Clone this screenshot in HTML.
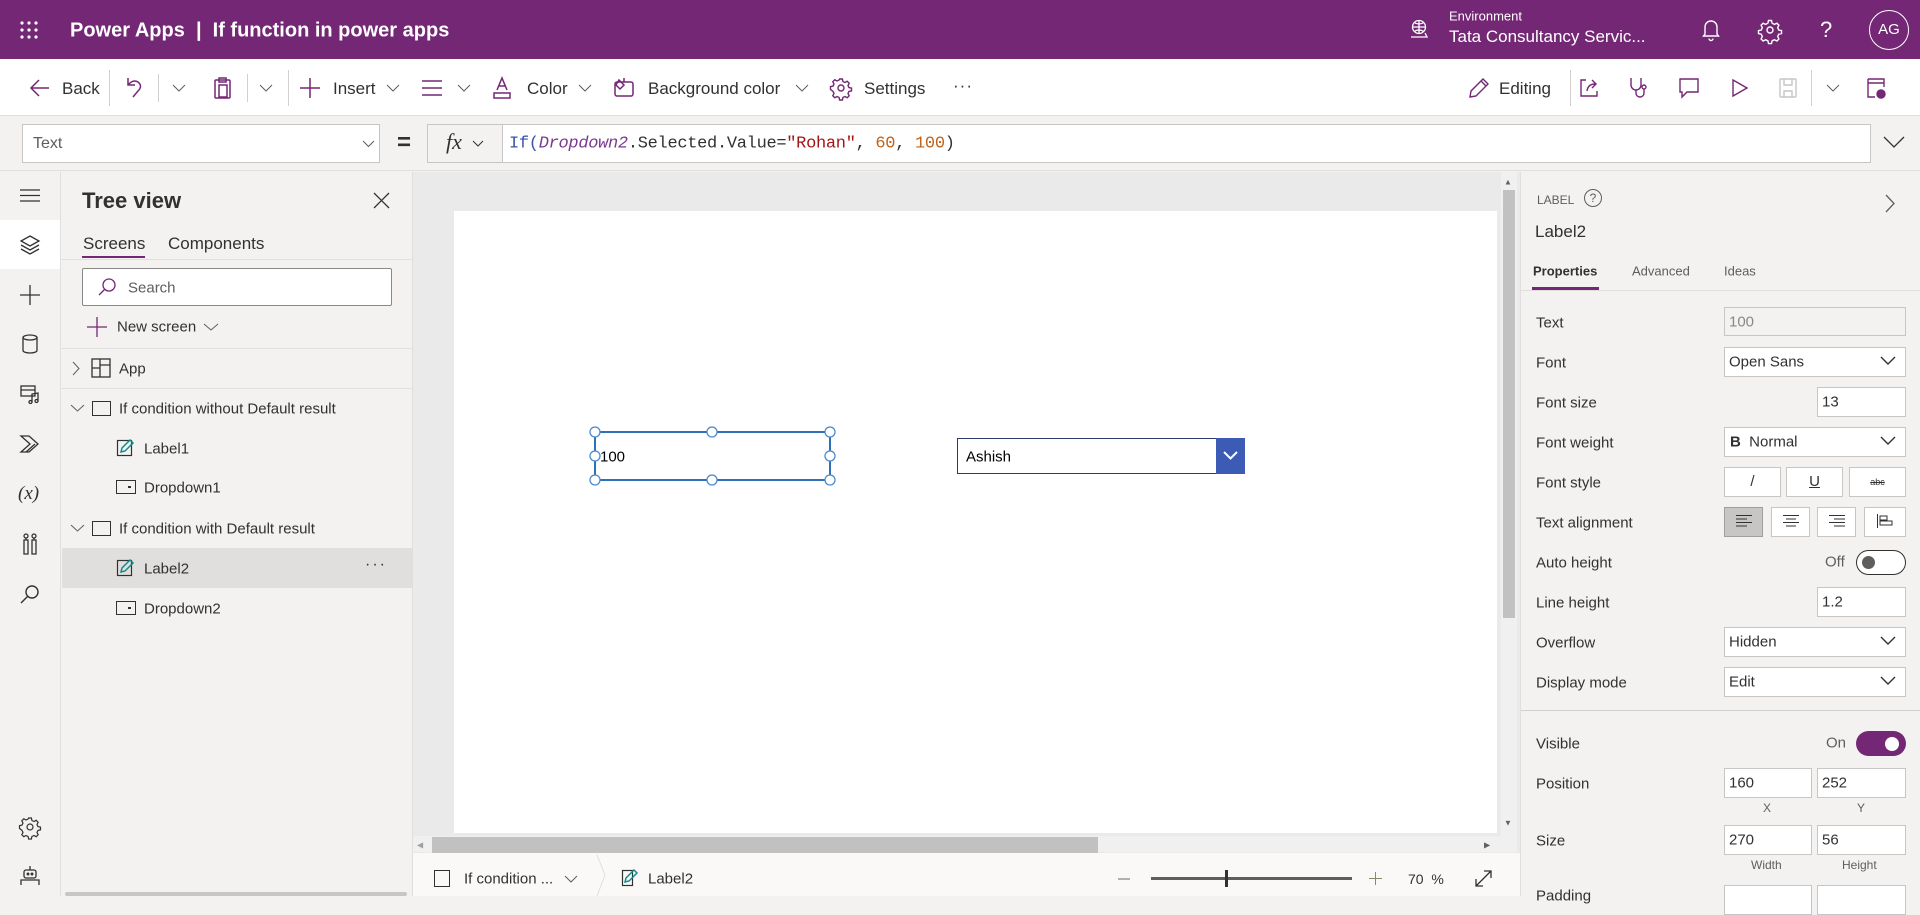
<!DOCTYPE html>
<html><head><meta charset="utf-8"><style>
*{box-sizing:border-box;margin:0;padding:0}
body{width:1920px;height:896px;overflow:hidden;background:#f3f2f1;font-family:"Liberation Sans",sans-serif;color:#323130;position:relative}
.a{position:absolute}
.t{position:absolute;white-space:nowrap;transform:translateY(-50%)}
svg{position:absolute;overflow:visible}
.inp{position:absolute;background:#fff;border:1px solid #c8c6c4}
.lbl{position:absolute;left:1536px;font-size:15px;color:#323130;transform:translateY(-50%)}
.dd svg{right:10px;top:9px}
</style></head><body>

<!-- top bar -->
<div class="a" style="left:0;top:0;width:1920px;height:59px;background:#742774"></div>
<svg style="left:20px;top:21px" width="18" height="18"><g fill="#fff"><circle cx="2" cy="2" r="1.6"/><circle cx="9" cy="2" r="1.6"/><circle cx="16" cy="2" r="1.6"/><circle cx="2" cy="9" r="1.6"/><circle cx="9" cy="9" r="1.6"/><circle cx="16" cy="9" r="1.6"/><circle cx="2" cy="16" r="1.6"/><circle cx="9" cy="16" r="1.6"/><circle cx="16" cy="16" r="1.6"/></g></svg>
<div class="t" style="left:70px;top:31px;color:#fff;font-size:20px;font-weight:bold">Power Apps&nbsp; | &nbsp;If function in power apps</div>
<svg style="left:1409px;top:19px" width="20" height="20" fill="none" stroke="#fff" stroke-width="1.3"><circle cx="10" cy="8" r="6.5"/><path d="M3.5 8h13M10 1.5v13M5 3.5q5 3 10 0M5 12.5q5-3 10 0M2 18h16l-2-4"/></svg>
<div class="t" style="left:1449px;top:16px;color:#fff;font-size:13px">Environment</div>
<div class="t" style="left:1449px;top:37px;color:#fff;font-size:17px">Tata Consultancy Servic...</div>
<svg style="left:1702px;top:19px" width="18" height="22" fill="none" stroke="#fff" stroke-width="1.4"><path d="M3 15V8a6 6 0 0 1 12 0v7l1.5 2h-15zM7 19.5a2 2 0 0 0 4 0"/></svg>
<svg style="left:1759px;top:19px" width="22" height="22" fill="none" stroke="#fff" stroke-width="1.4"><circle cx="11" cy="11" r="3"/><path d="M9.5 1.5h3l.6 2.7 2.3 1.2 2.5-1.2 2 2-1.2 2.5 1 2.3 2.8.6v3l-2.8.6-1 2.3 1.2 2.5-2 2-2.5-1.2-2.3 1-.6 2.8h-3l-.6-2.8-2.3-1-2.5 1.2-2-2 1.2-2.5-1-2.3-2.8-.6v-3l2.8-.6 1-2.3-1.2-2.5 2-2 2.5 1.2 2.3-1.2z"/></svg>
<div class="t" style="left:1820px;top:30px;color:#fff;font-size:22px">?</div>
<div class="a" style="left:1869px;top:10px;width:40px;height:40px;border:1.5px solid #fff;border-radius:50%;color:#fff;font-size:15px;text-align:center;line-height:37px">AG</div>

<!-- toolbar -->
<div class="a" style="left:0;top:59px;width:1920px;height:57px;background:#fff;border-bottom:1px solid #e1dfdd"></div>
<svg style="left:30px;top:79px" width="20" height="18" fill="none" stroke="#742774" stroke-width="1.5"><path d="M19 9H2M9 1L1 9l8 8"/></svg>
<div class="t" style="left:62px;top:89px;font-size:17px">Back</div>
<div class="a" style="left:109px;top:70px;width:1px;height:36px;background:#d2d0ce"></div>
<svg style="left:126px;top:77px" width="18" height="22" fill="none" stroke="#742774" stroke-width="1.5"><path d="M2 1v7h7M2 8q5-6 10-3 5 4 0 9l-5 6"/></svg>
<div class="a" style="left:158px;top:74px;width:1px;height:28px;background:#d2d0ce"></div>
<svg style="left:173px;top:85px" width="12" height="7" fill="none" stroke="#605e5c"><path d="M0 0l6 6 6-6"/></svg>
<svg style="left:214px;top:77px" width="18" height="22" fill="none" stroke="#742774" stroke-width="1.5"><rect x="1" y="3" width="15" height="18" rx="1"/><rect x="5" y="1" width="7" height="4"/><rect x="5" y="8" width="8" height="12"/></svg>
<div class="a" style="left:247px;top:74px;width:1px;height:28px;background:#d2d0ce"></div>
<svg style="left:260px;top:85px" width="12" height="7" fill="none" stroke="#605e5c"><path d="M0 0l6 6 6-6"/></svg>
<div class="a" style="left:288px;top:70px;width:1px;height:36px;background:#d2d0ce"></div>
<svg style="left:300px;top:78px" width="20" height="20" fill="none" stroke="#742774" stroke-width="1.5"><path d="M10 0v20M0 10h20"/></svg>
<div class="t" style="left:333px;top:89px;font-size:17px">Insert</div>
<svg style="left:387px;top:85px" width="12" height="7" fill="none" stroke="#605e5c"><path d="M0 0l6 6 6-6"/></svg>
<svg style="left:422px;top:80px" width="20" height="16" fill="none" stroke="#742774" stroke-width="1.5"><path d="M0 1h20M0 8h20M0 15h20"/></svg>
<svg style="left:458px;top:85px" width="12" height="7" fill="none" stroke="#605e5c"><path d="M0 0l6 6 6-6"/></svg>
<svg style="left:493px;top:77px" width="18" height="22" fill="none" stroke="#742774" stroke-width="1.5"><path d="M4 13l5-12 5 12M6 9h6"/><rect x="1" y="16" width="16" height="5"/></svg>
<div class="t" style="left:527px;top:89px;font-size:17px">Color</div>
<svg style="left:579px;top:85px" width="12" height="7" fill="none" stroke="#605e5c"><path d="M0 0l6 6 6-6"/></svg>
<svg style="left:614px;top:77px" width="20" height="20" fill="none" stroke="#742774" stroke-width="1.5"><rect x="1" y="5" width="18" height="14" rx="2"/><path d="M5 3l5 5-4 4-4-4zM10 1v4"/></svg>
<div class="t" style="left:648px;top:89px;font-size:17px">Background color</div>
<svg style="left:796px;top:85px" width="12" height="7" fill="none" stroke="#605e5c"><path d="M0 0l6 6 6-6"/></svg>
<svg style="left:831px;top:78px" width="20" height="20" fill="none" stroke="#742774" stroke-width="1.4"><circle cx="10" cy="10" r="3"/><path d="M8.6 1h2.8l.5 2.5 2.1 1 2.2-1.2 2 2-1.2 2.2 1 2.1 2.5.5v2.8l-2.5.5-1 2.1 1.2 2.2-2 2-2.2-1.2-2.1 1-.5 2.5H8.6l-.5-2.5-2.1-1-2.2 1.2-2-2 1.2-2.2-1-2.1L-.5 11.4V8.6L2 8.1l1-2.1-1.2-2.2 2-2L6 3l2.1-1z"/></svg>
<div class="t" style="left:864px;top:89px;font-size:17px">Settings</div>
<div class="t" style="left:953px;top:86px;font-size:17px;letter-spacing:1px">···</div>

<svg style="left:1469px;top:78px" width="20" height="20" fill="none" stroke="#742774" stroke-width="1.4"><path d="M14 1l5 5L7 18l-6 1 1-6zM12 3l5 5"/></svg>
<div class="t" style="left:1499px;top:89px;font-size:17px">Editing</div>
<div class="a" style="left:1570px;top:70px;width:1px;height:36px;background:#d2d0ce"></div>
<svg style="left:1579px;top:78px" width="20" height="20" fill="none" stroke="#742774" stroke-width="1.4"><path d="M7 2H2v16h16v-5M8 13q1-7 8-7M13 2l4 4-4 4"/></svg>
<svg style="left:1629px;top:77px" width="20" height="22" fill="none" stroke="#742774" stroke-width="1.4"><path d="M2 1v7a5 5 0 0 0 10 0V1M7 13v3a4 4 0 0 0 8 0v-4"/><circle cx="15" cy="10" r="2"/></svg>
<svg style="left:1679px;top:78px" width="20" height="20" fill="none" stroke="#742774" stroke-width="1.4"><path d="M1 1h18v13H8l-5 5v-5H1z"/></svg>
<svg style="left:1732px;top:79px" width="16" height="18" fill="none" stroke="#742774" stroke-width="1.4"><path d="M1 1l14 8-14 8z"/></svg>
<svg style="left:1779px;top:78px" width="18" height="20" fill="none" stroke="#c8c6c4" stroke-width="1.4"><rect x="1" y="1" width="16" height="18" rx="1"/><path d="M5 1v6h8V1M5 19v-6h8v6"/></svg>
<div class="a" style="left:1811px;top:70px;width:1px;height:36px;background:#d2d0ce"></div>
<svg style="left:1827px;top:85px" width="12" height="7" fill="none" stroke="#605e5c"><path d="M0 0l6 6 6-6"/></svg>
<svg style="left:1867px;top:78px" width="20" height="22" fill="none" stroke="#742774" stroke-width="1.4"><path d="M1 1h16v8M1 1v18h7M1 5h16"/><circle cx="14" cy="16" r="4" fill="#742774"/></svg>

<!-- formula bar -->
<div class="a" style="left:0;top:117px;width:1920px;height:54px;background:#f3f2f1;border-bottom:1px solid #e1dfdd"></div>
<div class="inp" style="left:22px;top:124px;width:358px;height:39px"></div>
<div class="t" style="left:33px;top:144px;font-size:16px;color:#605e5c">Text</div>
<svg style="left:363px;top:141px" width="11" height="6" fill="none" stroke="#605e5c"><path d="M0 0l5.5 5.5L11 0"/></svg>
<div class="t" style="left:397px;top:143px;font-size:24px;font-weight:bold">=</div>
<div class="inp" style="left:427px;top:124px;width:76px;height:39px;background:#f3f2f1"></div>
<div class="t" style="left:446px;top:142px;font-size:22px;font-family:'Liberation Serif',serif;font-style:italic">fx</div>
<svg style="left:473px;top:141px" width="10" height="6" fill="none" stroke="#323130"><path d="M0 0l5 5 5-5"/></svg>
<div class="inp" style="left:502px;top:124px;width:1369px;height:39px"></div>
<div class="t" style="left:509px;top:144px;font-size:17px;font-family:'Liberation Mono',monospace;letter-spacing:-0.3px"><span style="color:#3655a7">If(</span><span style="color:#7a3a90;font-style:italic">Dropdown2</span>.Selected.Value=<span style="color:#a31515">"Rohan"</span>, <span style="color:#c0631b">60</span>, <span style="color:#c0631b">100</span>)</div>
<svg style="left:1884px;top:137px" width="20" height="11" fill="none" stroke="#323130" stroke-width="1.3"><path d="M0 0l10 10L20 0"/></svg>

<!-- left rail -->
<div class="a" style="left:0;top:172px;width:61px;height:724px;background:#f3f2f1;border-right:1px solid #e1dfdd"></div>
<div class="a" style="left:0;top:220px;width:60px;height:49px;background:#fff"></div>
<svg style="left:20px;top:189px" width="20" height="13" fill="none" stroke="#323130" stroke-width="1.2"><path d="M0 1h20M0 6.5h20M0 12h20"/></svg>
<svg style="left:20px;top:235px" width="20" height="20" fill="none" stroke="#323130" stroke-width="1.3"><path d="M10 1l9 5-9 5-9-5zM1 10l9 5 9-5M1 14l9 5 9-5"/></svg>
<svg style="left:20px;top:285px" width="20" height="20" fill="none" stroke="#323130" stroke-width="1.3"><path d="M10 0v20M0 10h20"/></svg>
<svg style="left:22px;top:334px" width="16" height="20" fill="none" stroke="#323130" stroke-width="1.3"><ellipse cx="8" cy="3.5" rx="7" ry="2.5"/><path d="M1 3.5v13a7 2.5 0 0 0 14 0v-13"/></svg>
<svg style="left:20px;top:384px" width="20" height="20" fill="none" stroke="#323130" stroke-width="1.3"><rect x="1" y="2" width="14" height="10"/><path d="M1 6h14M12 18V10l6-1v8"/><circle cx="10.5" cy="18" r="1.5"/><circle cx="16.5" cy="17" r="1.5"/></svg>
<svg style="left:20px;top:435px" width="20" height="18" fill="none" stroke="#323130" stroke-width="1.3"><path d="M1 1h8l9 8-9 8H1l9-8zM6 17l9-8"/></svg>
<div class="t" style="left:18px;top:494px;font-size:19px;font-family:'Liberation Serif',serif;font-style:italic">(x)</div>
<svg style="left:22px;top:533px" width="16" height="22" fill="none" stroke="#323130" stroke-width="1.3"><circle cx="4" cy="3" r="2"/><circle cx="12" cy="3" r="2"/><path d="M2 7h4v14H2zM10 7h4v14h-4zM4 5v2M12 5v2"/></svg>
<svg style="left:20px;top:584px" width="20" height="20" fill="none" stroke="#323130" stroke-width="1.4"><circle cx="12" cy="8" r="6"/><path d="M8 12L1 19"/></svg>
<svg style="left:20px;top:817px" width="20" height="20" fill="none" stroke="#323130" stroke-width="1.2"><circle cx="10" cy="10" r="3"/><path d="M8.6 1h2.8l.5 2.5 2.1 1 2.2-1.2 2 2-1.2 2.2 1 2.1 2.5.5v2.8l-2.5.5-1 2.1 1.2 2.2-2 2-2.2-1.2-2.1 1-.5 2.5H8.6l-.5-2.5-2.1-1-2.2 1.2-2-2 1.2-2.2-1-2.1L-.5 11.4V8.6L2 8.1l1-2.1-1.2-2.2 2-2L6 3l2.1-1z"/></svg>
<svg style="left:20px;top:866px" width="20" height="20" fill="none" stroke="#323130" stroke-width="1.3"><path d="M10 0v4"/><rect x="4" y="4" width="12" height="8" rx="2"/><path d="M1 19v-5h18v5"/><circle cx="8" cy="8" r=".8"/><circle cx="12" cy="8" r=".8"/></svg>

<!-- tree panel -->
<div class="a" style="left:62px;top:172px;width:351px;height:724px;background:#f3f2f1;border-right:1px solid #e1dfdd"></div>
<div class="t" style="left:82px;top:201px;font-size:22px;font-weight:bold;color:#323130">Tree view</div>
<svg style="left:374px;top:193px" width="15" height="15" fill="none" stroke="#323130" stroke-width="1.3"><path d="M0 0l15 15M15 0L0 15"/></svg>
<div class="t" style="left:83px;top:244px;font-size:17px">Screens</div>
<div class="t" style="left:168px;top:244px;font-size:17px">Components</div>
<div class="a" style="left:82px;top:256px;width:63px;height:2px;background:#742774"></div>
<div class="a" style="left:62px;top:259px;width:350px;height:1px;background:#e1dfdd"></div>
<div class="inp" style="left:82px;top:268px;width:310px;height:38px;border-color:#8a8886;border-radius:2px"></div>
<svg style="left:98px;top:278px" width="18" height="18" fill="none" stroke="#742774" stroke-width="1.3"><circle cx="11" cy="7" r="6"/><path d="M7 11l-6 6"/></svg>
<div class="t" style="left:128px;top:288px;font-size:15px;color:#605e5c">Search</div>
<svg style="left:87px;top:317px" width="20" height="20" fill="none" stroke="#742774" stroke-width="1.3"><path d="M10 0v20M0 10h20"/></svg>
<div class="t" style="left:117px;top:327px;font-size:15px">New screen</div>
<svg style="left:204px;top:324px" width="14" height="7" fill="none" stroke="#605e5c"><path d="M0 0l7 6 7-6"/></svg>
<div class="a" style="left:62px;top:348px;width:350px;height:1px;background:#e1dfdd"></div>
<svg style="left:73px;top:362px" width="7" height="13" fill="none" stroke="#605e5c"><path d="M0 0l6 6.5L0 13"/></svg>
<svg style="left:91px;top:358px" width="20" height="20" fill="none" stroke="#323130" stroke-width="1.3"><rect x="1" y="1" width="18" height="18"/><path d="M9 1v18M1 10h8M9 7h10"/></svg>
<div class="t" style="left:119px;top:369px;font-size:15px">App</div>
<div class="a" style="left:62px;top:388px;width:350px;height:1px;background:#e1dfdd"></div>
<svg style="left:71px;top:405px" width="13" height="7" fill="none" stroke="#605e5c"><path d="M0 0l6.5 6L13 0"/></svg>
<div class="a" style="left:92px;top:401px;width:19px;height:15px;border:1.3px solid #323130"></div>
<div class="t" style="left:119px;top:409px;font-size:15px">If condition without Default result</div>
<svg style="left:117px;top:439px" width="17" height="17" fill="none" stroke="#323130" stroke-width="1.2"><rect x=".5" y="1.5" width="14" height="15"/><path d="M4 13l1-4 8-8 3 3-8 8z" stroke="#0f8b8d" stroke-width="1.5"/></svg>
<div class="t" style="left:144px;top:449px;font-size:15px">Label1</div>
<div class="a" style="left:116px;top:480px;width:20px;height:14px;border:1.3px solid #323130"></div><div class="a" style="left:128px;top:486px;width:3px;height:2px;background:#323130"></div>
<div class="t" style="left:144px;top:488px;font-size:15px">Dropdown1</div>
<svg style="left:71px;top:525px" width="13" height="7" fill="none" stroke="#605e5c"><path d="M0 0l6.5 6L13 0"/></svg>
<div class="a" style="left:92px;top:521px;width:19px;height:15px;border:1.3px solid #323130"></div>
<div class="t" style="left:119px;top:529px;font-size:15px">If condition with Default result</div>
<div class="a" style="left:62px;top:548px;width:350px;height:40px;background:#e1dfdd"></div>
<svg style="left:117px;top:559px" width="17" height="17" fill="none" stroke="#323130" stroke-width="1.2"><rect x=".5" y="1.5" width="14" height="15"/><path d="M4 13l1-4 8-8 3 3-8 8z" stroke="#0f8b8d" stroke-width="1.5"/></svg>
<div class="t" style="left:144px;top:569px;font-size:15px">Label2</div>
<div class="t" style="left:365px;top:565px;font-size:16px;letter-spacing:2px">···</div>
<div class="a" style="left:116px;top:601px;width:20px;height:14px;border:1.3px solid #323130"></div><div class="a" style="left:128px;top:607px;width:3px;height:2px;background:#323130"></div>
<div class="t" style="left:144px;top:609px;font-size:15px">Dropdown2</div>
<div class="a" style="left:65px;top:892px;width:342px;height:4px;background:#c8c6c4;border-radius:2px"></div>

<!-- canvas -->
<div class="a" style="left:413px;top:172px;width:1107px;height:685px;background:#eaeaea"></div>
<div class="a" style="left:454px;top:211px;width:1043px;height:622px;background:#fff"></div>
<div class="a" style="left:1501px;top:172px;width:16px;height:664px;background:#f0f0f0"></div>
<div class="a" style="left:1503px;top:190px;width:12px;height:428px;background:#c1c1c1"></div>
<div class="t" style="left:1504px;top:182px;font-size:8px;color:#606060">▲</div>
<div class="t" style="left:1504px;top:823px;font-size:8px;color:#606060">▼</div>
<div class="a" style="left:413px;top:836px;width:1104px;height:16px;background:#f0f0f0"></div>
<div class="a" style="left:432px;top:837px;width:666px;height:16px;background:#c1c1c1"></div>
<div class="t" style="left:417px;top:845px;font-size:8px;color:#a0a0a0">◀</div>
<div class="t" style="left:1484px;top:845px;font-size:8px;color:#606060">▶</div>

<div class="a" style="left:594px;top:431px;width:237px;height:50px;border:2px solid #2f6fb6"></div>
<svg style="left:0;top:0" width="1" height="1"><g fill="#fff" stroke="#4a8ad0" stroke-width="1.3"><circle cx="595" cy="432" r="5"/><circle cx="712" cy="432" r="5"/><circle cx="830" cy="432" r="5"/><circle cx="595" cy="456" r="5"/><circle cx="830" cy="456" r="5"/><circle cx="595" cy="480" r="5"/><circle cx="712" cy="480" r="5"/><circle cx="830" cy="480" r="5"/></g></svg>
<div class="t" style="left:600px;top:457px;font-size:15px;color:#000">100</div>
<div class="a" style="left:957px;top:438px;width:288px;height:36px;border:1.5px solid #2b3a6f;background:#fff"></div>
<div class="a" style="left:1216px;top:438px;width:29px;height:36px;background:#3b5bb5"></div>
<svg style="left:1223px;top:451px" width="15" height="9" fill="none" stroke="#fff" stroke-width="2"><path d="M1 1l6.5 6.5L14 1"/></svg>
<div class="t" style="left:966px;top:457px;font-size:15px;color:#000">Ashish</div>

<!-- status bar -->
<div class="a" style="left:413px;top:853px;width:1107px;height:43px;background:#faf9f8"></div>
<div class="a" style="left:434px;top:870px;width:16px;height:17px;border:1.3px solid #323130"></div>
<div class="t" style="left:464px;top:879px;font-size:15px">If condition ...</div>
<svg style="left:565px;top:876px" width="12" height="7" fill="none" stroke="#605e5c"><path d="M0 0l6 6 6-6"/></svg>
<svg style="left:596px;top:855px" width="10" height="41" fill="none" stroke="#e1dfdd"><path d="M1 0l8 20-8 21"/></svg>
<svg style="left:622px;top:869px" width="17" height="18" fill="none" stroke="#323130" stroke-width="1.2"><rect x=".5" y="1.5" width="10" height="15"/><path d="M3 13l1-4 8-8 3 3-8 8z" stroke="#0f8b8d" stroke-width="1.5"/></svg>
<div class="t" style="left:648px;top:879px;font-size:15px">Label2</div>
<div class="a" style="left:1118px;top:878px;width:12px;height:2px;background:#b3b0ad"></div>
<div class="a" style="left:1151px;top:877px;width:201px;height:3px;background:#605e5c"></div>
<div class="a" style="left:1225px;top:870px;width:3px;height:17px;background:#323130"></div>
<svg style="left:1369px;top:872px" width="13" height="13" fill="none" stroke="#8a8a60"><path d="M6.5 0v13M0 6.5h13"/></svg>
<div class="t" style="left:1408px;top:879px;font-size:14px">70 &nbsp;%</div>
<svg style="left:1475px;top:870px" width="17" height="17" fill="none" stroke="#323130" stroke-width="1.3"><path d="M1 16L16 1M9 1h7v7M1 9v7h7"/></svg>

<!-- right panel -->
<div class="a" style="left:1520px;top:172px;width:400px;height:724px;background:#f3f2f1;border-left:1px solid #e1dfdd"></div>
<div class="t" style="left:1537px;top:200px;font-size:12px;color:#605e5c">LABEL</div>
<div class="a" style="left:1584px;top:189px;width:18px;height:18px;border:1.3px solid #605e5c;border-radius:50%;font-size:12px;text-align:center;line-height:16px;color:#605e5c">?</div>
<svg style="left:1886px;top:195px" width="9" height="17" fill="none" stroke="#605e5c" stroke-width="1.3"><path d="M0 0l8 8.5L0 17"/></svg>
<div class="t" style="left:1535px;top:232px;font-size:17px">Label2</div>
<div class="t" style="left:1533px;top:271px;font-size:13px;font-weight:bold">Properties</div>
<div class="t" style="left:1632px;top:271px;font-size:13px;color:#605e5c">Advanced</div>
<div class="t" style="left:1724px;top:271px;font-size:13px;color:#605e5c">Ideas</div>
<div class="a" style="left:1532px;top:287px;width:67px;height:3px;background:#742774"></div>
<div class="a" style="left:1521px;top:290px;width:399px;height:1px;background:#e1dfdd"></div>

<div class="lbl" style="top:323px">Text</div>
<div class="inp" style="left:1724px;top:307px;width:182px;height:29px;background:#f3f2f1"></div>
<div class="t" style="left:1729px;top:322px;font-size:15px;color:#8a8886">100</div>
<div class="lbl" style="top:363px">Font</div>
<div class="inp dd" style="left:1724px;top:347px;width:182px;height:30px"><svg width="14" height="8" fill="none" stroke="#323130" stroke-width="1.4"><path d="M0 0l7 7 7-7"/></svg></div>
<div class="t" style="left:1729px;top:362px;font-size:15px">Open Sans</div>
<div class="lbl" style="top:403px">Font size</div>
<div class="inp" style="left:1817px;top:387px;width:89px;height:30px"></div>
<div class="t" style="left:1822px;top:402px;font-size:15px">13</div>
<div class="lbl" style="top:443px">Font weight</div>
<div class="inp dd" style="left:1724px;top:427px;width:182px;height:30px"><svg width="14" height="8" fill="none" stroke="#323130" stroke-width="1.4"><path d="M0 0l7 7 7-7"/></svg></div>
<div class="t" style="left:1730px;top:442px;font-size:15px"><b>B</b>&nbsp;&nbsp;Normal</div>
<div class="lbl" style="top:483px">Font style</div>
<div class="inp" style="left:1724px;top:467px;width:57px;height:30px;text-align:center;font-size:15px;line-height:28px">/</div>
<div class="inp" style="left:1786px;top:467px;width:57px;height:30px;text-align:center;font-size:15px;line-height:28px;text-decoration:underline">U</div>
<div class="inp" style="left:1849px;top:467px;width:57px;height:30px;text-align:center;font-size:9px;line-height:28px;text-decoration:line-through">abc</div>
<div class="lbl" style="top:523px">Text alignment</div>
<div class="inp" style="left:1724px;top:507px;width:39px;height:30px;background:#c8c6c4;border-color:#a19f9d"></div>
<div class="inp" style="left:1771px;top:507px;width:39px;height:30px"></div>
<div class="inp" style="left:1817px;top:507px;width:39px;height:30px"></div>
<div class="inp" style="left:1864px;top:507px;width:42px;height:30px"></div>
<svg style="left:1736px;top:515px" width="16" height="12" stroke="#323130"><path d="M0 .5h16M0 4h11M0 7.5h16M0 11h11"/></svg>
<svg style="left:1783px;top:515px" width="16" height="12" stroke="#323130"><path d="M0 .5h16M3 4h10M0 7.5h16M3 11h10"/></svg>
<svg style="left:1829px;top:515px" width="16" height="12" stroke="#323130"><path d="M0 .5h16M5 4h11M0 7.5h16M5 11h11"/></svg>
<svg style="left:1877px;top:514px" width="16" height="14" fill="none" stroke="#323130"><path d="M.5 0v14M3 2h7v4H3zM3 7h12v4H3z"/></svg>
<div class="lbl" style="top:563px">Auto height</div>
<div class="t" style="left:1825px;top:562px;font-size:15px;color:#605e5c">Off</div>
<div class="a" style="left:1856px;top:550px;width:50px;height:25px;border:1.3px solid #323130;border-radius:13px;background:#fff"></div>
<div class="a" style="left:1862px;top:556px;width:13px;height:13px;border-radius:50%;background:#605e5c"></div>
<div class="lbl" style="top:603px">Line height</div>
<div class="inp" style="left:1817px;top:587px;width:89px;height:30px"></div>
<div class="t" style="left:1822px;top:602px;font-size:15px">1.2</div>
<div class="lbl" style="top:643px">Overflow</div>
<div class="inp dd" style="left:1724px;top:627px;width:182px;height:30px"><svg width="14" height="8" fill="none" stroke="#323130" stroke-width="1.4"><path d="M0 0l7 7 7-7"/></svg></div>
<div class="t" style="left:1729px;top:642px;font-size:15px">Hidden</div>
<div class="lbl" style="top:683px">Display mode</div>
<div class="inp dd" style="left:1724px;top:667px;width:182px;height:30px"><svg width="14" height="8" fill="none" stroke="#323130" stroke-width="1.4"><path d="M0 0l7 7 7-7"/></svg></div>
<div class="t" style="left:1729px;top:682px;font-size:15px">Edit</div>
<div class="a" style="left:1521px;top:710px;width:399px;height:1px;background:#d2d0ce"></div>
<div class="lbl" style="top:744px">Visible</div>
<div class="t" style="left:1826px;top:743px;font-size:15px;color:#605e5c">On</div>
<div class="a" style="left:1856px;top:731px;width:50px;height:25px;border-radius:13px;background:#742774"></div>
<div class="a" style="left:1885px;top:737px;width:14px;height:14px;border-radius:50%;background:#fff"></div>
<div class="lbl" style="top:784px">Position</div>
<div class="inp" style="left:1724px;top:768px;width:88px;height:30px"></div>
<div class="inp" style="left:1817px;top:768px;width:89px;height:30px"></div>
<div class="t" style="left:1729px;top:783px;font-size:15px">160</div>
<div class="t" style="left:1822px;top:783px;font-size:15px">252</div>
<div class="t" style="left:1763px;top:808px;font-size:12px;color:#605e5c">X</div>
<div class="t" style="left:1857px;top:808px;font-size:12px;color:#605e5c">Y</div>
<div class="lbl" style="top:841px">Size</div>
<div class="inp" style="left:1724px;top:825px;width:88px;height:30px"></div>
<div class="inp" style="left:1817px;top:825px;width:89px;height:30px"></div>
<div class="t" style="left:1729px;top:840px;font-size:15px">270</div>
<div class="t" style="left:1822px;top:840px;font-size:15px">56</div>
<div class="t" style="left:1751px;top:865px;font-size:12px;color:#605e5c">Width</div>
<div class="t" style="left:1842px;top:865px;font-size:12px;color:#605e5c">Height</div>
<div class="lbl" style="top:896px">Padding</div>
<div class="inp" style="left:1724px;top:885px;width:88px;height:30px"></div>
<div class="inp" style="left:1817px;top:885px;width:89px;height:30px"></div>
</body></html>
